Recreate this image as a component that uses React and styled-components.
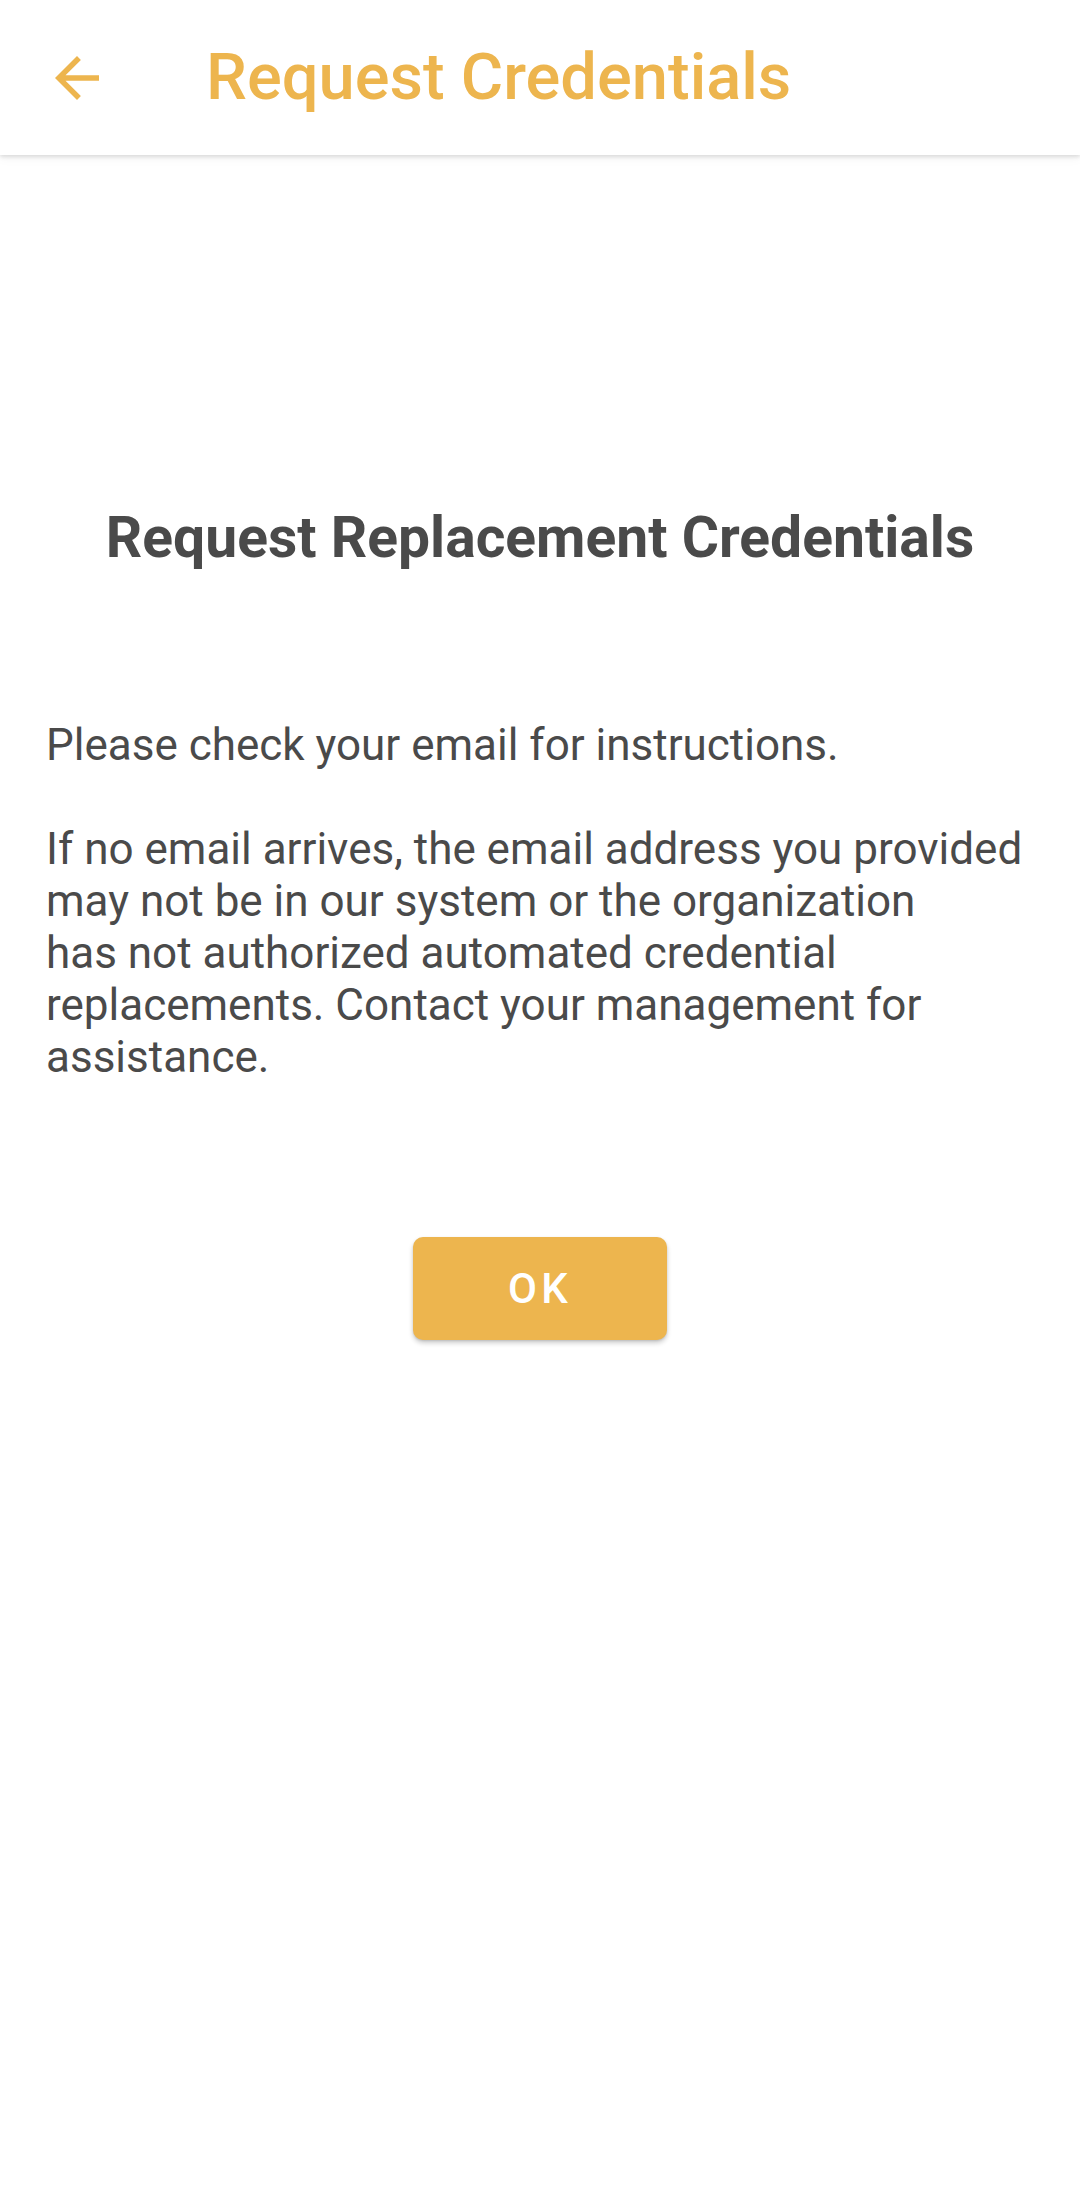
import React from "react";
import styled, { createGlobalStyle } from "styled-components";

const GlobalStyle = createGlobalStyle`
  html, body {
    margin: 0;
    padding: 0;
    background: #ffffff;
  }
  body {
    font-family: Roboto, "Noto Sans", "Liberation Sans", sans-serif;
  }
`;

const AMBER = "#edb54e";
const TEXT = "#4a4a4a";

const BackIcon = () => (
  <svg viewBox="0 0 24 24" width="66" height="66" fill={AMBER}>
    <path d="M20 11H7.83l5.59-5.59L12 4l-8 8 8 8 1.41-1.41L7.83 13H20v-2z" />
  </svg>
);

const App = () => {
  return (
    <Screen>
      <GlobalStyle />
      <Toolbar>
        <IconButton aria-label="back">
          <BackIcon />
        </IconButton>
        <ToolbarTitle>Request Credentials</ToolbarTitle>
      </Toolbar>

      <Content>
        <Heading>Request Replacement Credentials</Heading>
        <Message>
          <Paragraph>Please check your email for instructions.</Paragraph>
          <Paragraph>
            If no email arrives, the email address you provided
            <br />
            may not be in our system or the organization
            <br />
            has not authorized automated credential
            <br />
            replacements. Contact your management for
            <br />
            assistance.
          </Paragraph>
        </Message>
        <OkButton>OK</OkButton>
      </Content>
    </Screen>
  );
};

const Screen = styled.div`
  width: 1080px;
  min-height: 2205px;
  background: #ffffff;
  display: flex;
  flex-direction: column;
`;

const Toolbar = styled.header`
  height: 155px;
  display: flex;
  align-items: center;
  padding-left: 44px;
  gap: 96px;
  background: #ffffff;
  box-shadow: 0 2px 4px rgba(0, 0, 0, 0.12), 0 4px 10px rgba(0, 0, 0, 0.04);
  position: relative;
  z-index: 1;
`;

const IconButton = styled.button`
  width: 66px;
  height: 66px;
  padding: 0;
  border: none;
  background: none;
  display: flex;
  align-items: center;
  justify-content: center;
`;

const ToolbarTitle = styled.h1`
  margin: 0;
  font-size: 65px;
  font-weight: 500;
  color: ${AMBER};
  line-height: 1;
`;

const Content = styled.main`
  display: flex;
  flex-direction: column;
  align-items: center;
  padding: 349px 46px 0;
`;

const Heading = styled.h2`
  margin: 0;
  font-size: 57px;
  line-height: 68px;
  font-weight: 700;
  color: ${TEXT};
  text-align: center;
`;

const Message = styled.div`
  align-self: stretch;
  margin-top: 147px;
  display: flex;
  flex-direction: column;
  gap: 52px;
`;

const Paragraph = styled.p`
  margin: 0;
  font-size: 44px;
  line-height: 52px;
  color: ${TEXT};
  white-space: nowrap;
`;

const OkButton = styled.button`
  margin-top: 154px;
  width: 254px;
  height: 103px;
  border: none;
  border-radius: 10px;
  background: ${AMBER};
  color: #ffffff;
  font-family: Roboto, "Noto Sans", sans-serif;
  font-size: 42px;
  font-weight: 500;
  letter-spacing: 0.1em;
  box-shadow: 0 3px 5px rgba(0, 0, 0, 0.2), 0 1px 2px rgba(0, 0, 0, 0.1);
`;

export default App;
